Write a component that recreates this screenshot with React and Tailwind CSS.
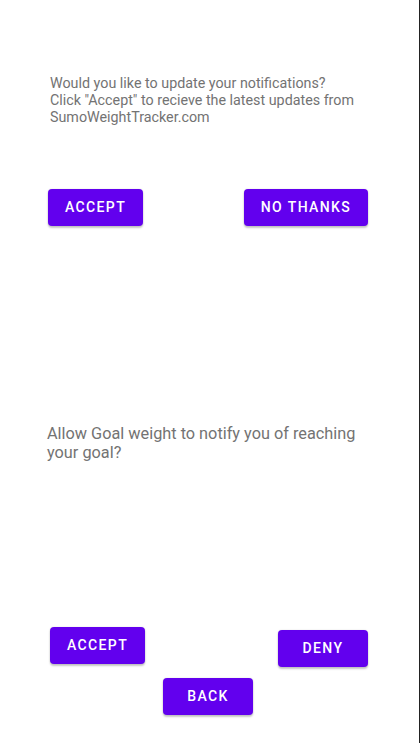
import React from "react";

const Btn = ({ label, className = "" }) => (
  <button
    className={`h-[37px] rounded-[4px] bg-[#6200ee] text-white text-[14px] font-medium tracking-[1.4px] uppercase shadow-[0_2px_2px_rgba(0,0,0,0.22),0_0_2px_rgba(0,0,0,0.12)] ${className}`}
  >
    {label}
  </button>
);

const App = () => {
  return (
    <div
      className="w-[420px] h-[743px] bg-white border-r border-[#222] flex flex-col"
      style={{ fontFamily: "Roboto, 'Liberation Sans', sans-serif" }}
    >
      <p className="mt-[75px] ml-[50px] text-[14.3px] leading-[17px] text-[#737373]">
        Would you like to update your notifications?
        <br />
        Click "Accept" to recieve the latest updates from
        <br />
        SumoWeightTracker.com
      </p>

      <div className="mt-[63px] pl-[48px] pr-[51px] flex justify-between">
        <Btn label="Accept" className="w-[95px]" />
        <Btn label="No thanks" className="w-[124px]" />
      </div>

      <p className="mt-[198px] ml-[47px] w-[330px] text-[16.3px] leading-[19px] text-[#737373]">
        Allow Goal weight to notify you of reaching your goal?
      </p>

      <div className="mt-[165px] pl-[50px] pr-[51px] flex justify-between items-start">
        <Btn label="Accept" className="w-[95px]" />
        <Btn label="Deny" className="w-[90px] mt-[3px]" />
      </div>

      <div className="mt-[11px] pl-[163px]">
        <Btn label="Back" className="w-[90px]" />
      </div>
    </div>
  );
};

export default App;
